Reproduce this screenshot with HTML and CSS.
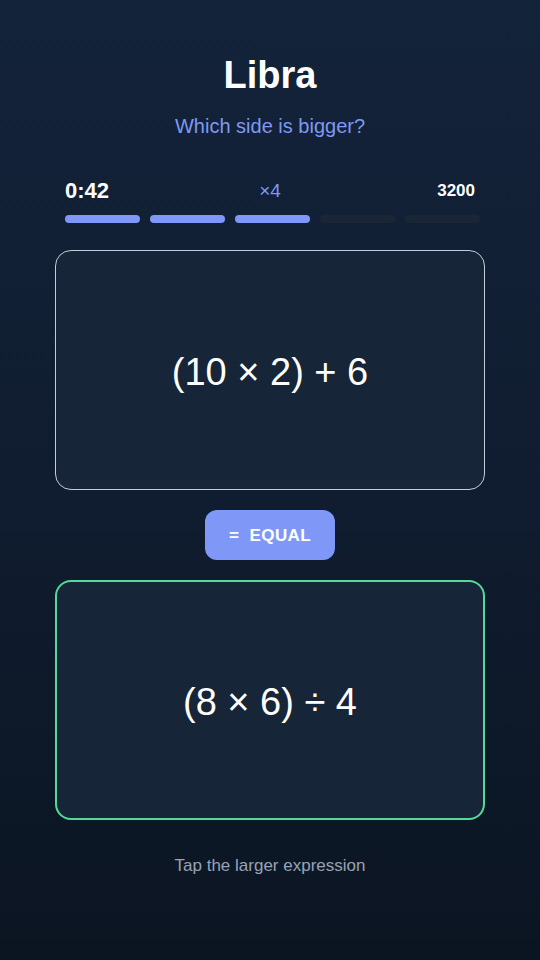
FILE: index.html
```html
<!DOCTYPE html>
<html lang="en">
<head>
<meta charset="utf-8">
<title>Libra</title>
<link rel="stylesheet" href="styles.css">
</head>
<body>
<main class="app">
  <h1 class="title">Libra</h1>
  <p class="subtitle">Which side is bigger?</p>
  <div class="stats">
    <span class="time">0:42</span>
    <span class="combo">×4</span>
    <span class="score">3200</span>
  </div>
  <div class="bars">
    <span class="bar on"></span>
    <span class="bar on"></span>
    <span class="bar on"></span>
    <span class="bar"></span>
    <span class="bar"></span>
  </div>
  <button class="card card-top">(10 × 2) + 6</button>
  <button class="equal">=&nbsp; EQUAL</button>
  <button class="card card-bottom">(8 × 6) ÷ 4</button>
  <p class="hint">Tap the larger expression</p>
</main>
</body>
</html>
```
FILE: styles.css
```css
html, body {
  margin: 0;
  padding: 0;
}
body {
  width: 540px;
  height: 960px;
  background: linear-gradient(180deg, #13233a 0%, #101d30 50%, #0b1522 100%);
  font-family: "Liberation Sans", Arial, sans-serif;
  color: #ffffff;
  overflow: hidden;
}
.app {
  display: flex;
  flex-direction: column;
  align-items: center;
  padding-top: 53px;
}
.title {
  margin: 0;
  font-size: 38px;
  line-height: 44px;
  font-weight: 700;
}
.subtitle {
  margin: 18px 0 0;
  font-size: 20px;
  line-height: 22px;
  color: #7e99f2;
}
.stats {
  margin-top: 41px;
  margin-left: 5px;
  width: 410px;
  padding-right: 5px;
  display: grid;
  grid-template-columns: 1fr auto 1fr;
  align-items: center;
  height: 24px;
}
.time {
  font-size: 22px;
  font-weight: 700;
  justify-self: start;
}
.combo {
  font-size: 19px;
  color: #7e99f2;
}
.score {
  font-size: 17px;
  font-weight: 700;
  justify-self: end;
}
.bars {
  margin-top: 13px;
  margin-left: 5px;
  display: flex;
  gap: 10px;
}
.bar {
  width: 75px;
  height: 8px;
  border-radius: 4px;
  background: #1a2636;
}
.bar.on {
  background: #7f98f7;
}
.card {
  box-sizing: border-box;
  width: 430px;
  height: 240px;
  border-radius: 16px;
  background: #172538;
  color: #ffffff;
  font-family: "Liberation Sans", Arial, sans-serif;
  font-size: 38px;
  display: flex;
  align-items: center;
  justify-content: center;
  padding: 4px 0 0;
}
.card-top {
  margin-top: 27px;
  border: 1px solid #c3ccd8;
}
.card-bottom {
  border: 2px solid #56d996;
}
.equal {
  margin: 20px 0;
  width: 130px;
  height: 50px;
  border: none;
  border-radius: 12px;
  background: #7f98f7;
  color: #ffffff;
  font-family: "Liberation Sans", Arial, sans-serif;
  font-size: 17px;
  font-weight: 700;
  letter-spacing: 0.4px;
  padding: 2px 0 0;
}
.hint {
  margin: 36px 0 0;
  font-size: 17px;
  line-height: 20px;
  color: #97a3b5;
}
```
